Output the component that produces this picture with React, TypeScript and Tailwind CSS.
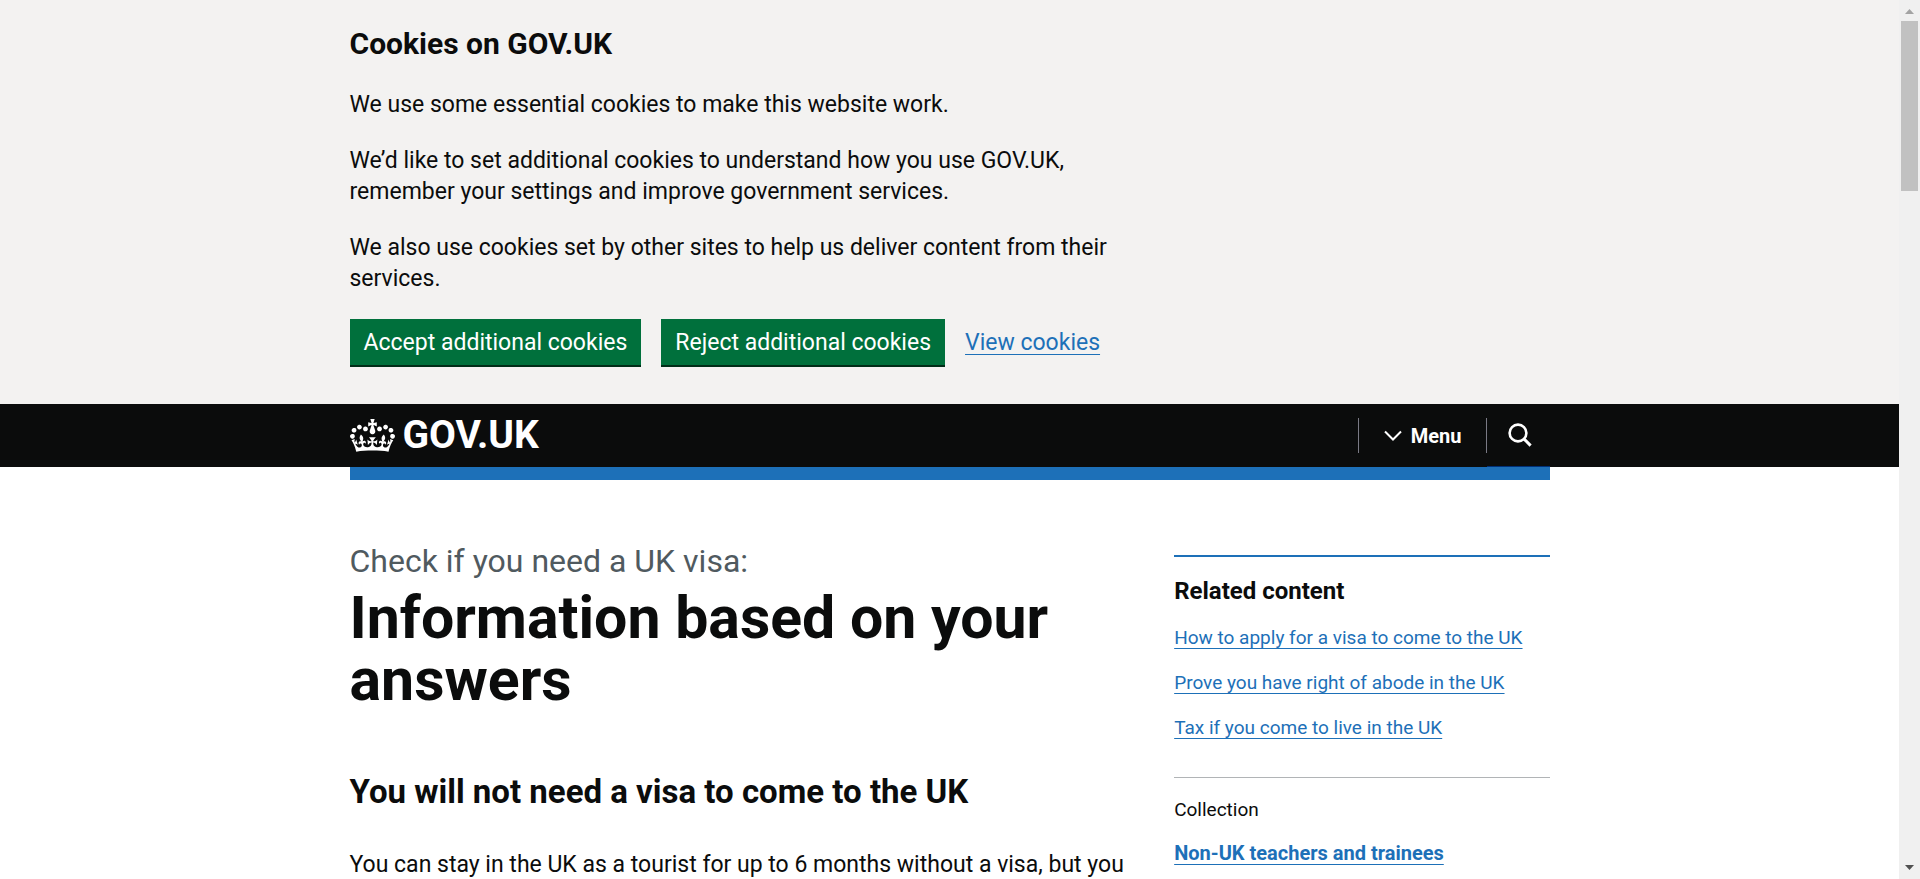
import type { ReactNode } from "react";

const relatedLinks = [
  "How to apply for a visa to come to the UK",
  "Prove you have right of abode in the UK",
  "Tax if you come to live in the UK",
];

function Container({ className = "", children }: { className?: string; children?: ReactNode }) {
  return <div className={`mx-auto w-full max-w-[1200px] ${className}`}>{children}</div>;
}

function TextLink({ className = "", children }: { className?: string; children: ReactNode }) {
  return (
    <a
      href="#"
      className={`text-[#1d70b8] underline decoration-1 underline-offset-4 hover:text-[#003078] ${className}`}
    >
      {children}
    </a>
  );
}

function GreenButton({ children }: { children: ReactNode }) {
  return (
    <button
      type="button"
      className="h-[46px] bg-[#00703c] px-[14px] pt-[2px] text-[23px] text-white shadow-[0_2px_0_#002d18] hover:bg-[#005a30]"
    >
      {children}
    </button>
  );
}

function Crown() {
  return (
    <svg aria-hidden="true" viewBox="0 0 132 97" className="h-[33px] w-[45px]" fill="currentColor" fillRule="evenodd">
      <path d="M25 30.2c3.5 1.5 7.7-.2 9.1-3.7 1.5-3.6-.2-7.8-3.9-9.2-3.6-1.4-7.6.3-9.1 3.9-1.4 3.5.3 7.5 3.9 9zM9 39.5c3.6 1.5 7.8-.2 9.2-3.7 1.5-3.6-.2-7.8-3.9-9.1-3.6-1.5-7.6.2-9.1 3.8-1.4 3.5.3 7.5 3.8 9zM4.4 57.2c3.5 1.5 7.7-.2 9.1-3.8 1.5-3.6-.2-7.7-3.9-9.1-3.5-1.5-7.6.3-9.1 3.8-1.4 3.5.3 7.6 3.9 9.1zm38.3-21.4c3.5 1.5 7.7-.2 9.1-3.8 1.5-3.6-.2-7.7-3.9-9.1-3.6-1.5-7.6.3-9.1 3.8-1.3 3.6.4 7.7 3.9 9.1zm64.4-5.6c-3.6 1.5-7.8-.2-9.1-3.7-1.5-3.6.2-7.8 3.8-9.2 3.6-1.4 7.7.3 9.2 3.9 1.3 3.5-.4 7.5-3.9 9zm15.9 9.3c-3.6 1.5-7.7-.2-9.1-3.7-1.5-3.6.2-7.8 3.7-9.1 3.6-1.5 7.7.2 9.2 3.8 1.5 3.5-.3 7.5-3.8 9zm4.7 17.7c-3.6 1.5-7.8-.2-9.2-3.8-1.5-3.6.2-7.7 3.9-9.1 3.6-1.5 7.7.3 9.2 3.8 1.3 3.5-.4 7.6-3.9 9.1zM89.3 35.8c-3.6 1.5-7.8-.2-9.2-3.8-1.4-3.6.2-7.7 3.9-9.1 3.6-1.5 7.7.3 9.2 3.8 1.4 3.6-.3 7.7-3.9 9.1zM69.7 17.7l8.9 4.7V9.3l-8.9 2.8c-.2-.3-.5-.6-.9-.9L72.4 0H59.6l3.5 11.2c-.3.3-.6.5-.9.9l-8.8-2.8v13.1l8.8-4.7c.3.3.6.7.9.9l-5 15.4v.1c-.2.8-.4 1.6-.4 2.4 0 4.1 3.1 7.5 7 8.1h.2c.3 0 .7.1 1 .1.4 0 .7 0 1-.1h.2c4-.6 7.1-4.1 7.1-8.1 0-.8-.1-1.7-.4-2.4V34l-5.1-15.4c.4-.2.7-.6 1-.9zM66 92.8c16.9 0 32.8 1.1 47.1 3.2 4-16.9 8.9-26.7 14-33.5l-9.6-3.4c1 4.9 1.1 7.2 0 10.2-1.5-1.4-3-4.3-4.2-8.7L108.6 76c2.8-2 5-3.2 7.5-3.3-4.4 9.4-10 11.9-13.6 11.2-4.3-.8-6.3-4.6-5.6-7.9 1-4.7 5.7-5.9 8-.5 4.3-8.7-3-11.4-7.6-8.8 7.1-7.2 7.9-13.5 2.1-21.1-8 6.1-8.1 12.3-4.5 20.8-4.7-5.4-12.1-2.5-9.5 6.2 3.4-5.2 7.9-2 7.2 3.1-.6 4.3-6.4 7.8-13.5 7.2-10.3-.9-10.9-8-11.2-13.8 2.5-.5 7.1 1.8 11 7.3L80.2 60c-4.1 4.4-8 5.3-12.3 5.4 1.4-4.4 8-11.6 8-11.6H55.5s6.4 7.2 7.9 11.6c-4.2-.1-8-1-12.3-5.4l1.4 16.4c3.9-5.5 8.5-7.7 10.9-7.3-.3 5.8-.9 12.8-11.1 13.8-7.2.6-12.9-2.9-13.5-7.2-.7-5 3.8-8.3 7.1-3.1 2.7-8.7-4.6-11.6-9.4-6.2 3.7-8.5 3.6-14.7-4.6-20.8-5.8 7.6-5 13.9 2.2 21.1-4.7-2.6-11.9.1-7.7 8.8 2.3-5.5 7.1-4.2 8.1.5.7 3.3-1.3 7.1-5.7 7.9-3.5.7-9-1.8-13.5-11.2 2.5.1 4.7 1.3 7.5 3.3l-4.7-15.4c-1.2 4.4-2.7 7.2-4.3 8.7-1.1-3-.9-5.3 0-10.2l-9.5 3.4c5 6.9 9.9 16.7 14 33.5 14.8-2.1 30.8-3.2 47.7-3.2z" />
    </svg>
  );
}

function CookieBanner() {
  return (
    <section aria-label="Cookies on GOV.UK" className="bg-[#f3f2f1] pt-[25px] pb-[36px]">
      <Container>
        <h2 className="mb-[27px] text-[30px] leading-[37px] font-bold">Cookies on GOV.UK</h2>
        <div className="flex max-w-[788px] flex-col gap-[25px] text-[23px] leading-[31px]">
          <p>We use some essential cookies to make this website work.</p>
          <p>
            We’d like to set additional cookies to understand how you use GOV.UK, remember your settings and improve
            government services.
          </p>
          <p>We also use cookies set by other sites to help us deliver content from their services.</p>
        </div>
        <div className="mt-[25px] flex items-baseline gap-5 pb-[3px]">
          <GreenButton>Accept additional cookies</GreenButton>
          <GreenButton>Reject additional cookies</GreenButton>
          <TextLink className="text-[23px]">View cookies</TextLink>
        </div>
      </Container>
    </section>
  );
}

function Header() {
  return (
    <header>
      <div className="bg-[#0b0c0c] text-white">
        <Container className="flex h-[63px] items-stretch justify-between">
          <a href="#" className="flex items-center gap-2 text-[39px] leading-none font-bold">
            <Crown />
            GOV.UK
          </a>
          <nav aria-label="Menu" className="flex items-stretch">
            <div className="my-[14px] flex border-x border-[#7a7a85]">
              <button type="button" className="flex items-center gap-[9px] pr-[24px] pl-[25px] text-[20px] font-bold">
                <svg aria-hidden="true" viewBox="0 0 18 12" className="h-[12px] w-[18px]" fill="none" stroke="currentColor" strokeWidth="2">
                  <path d="M1 1.5 9 9.5 17 1.5" />
                </svg>
                Menu
              </button>
            </div>
            <button
              type="button"
              aria-label="Search GOV.UK"
              className="flex w-[63px] items-center justify-center border-b border-[#003078] pl-[3px]"
            >
              <svg aria-hidden="true" viewBox="0 0 24 24" className="size-[24px]" fill="none" stroke="currentColor" strokeWidth="2.6">
                <circle cx="10" cy="10" r="8.4" />
                <path d="M15.6 15.6 22.6 22.6" strokeWidth="3" />
              </svg>
            </button>
          </nav>
        </Container>
      </div>
      <Container className="h-[13px] bg-[#1d70b8]" />
    </header>
  );
}

function RelatedContent() {
  return (
    <aside className="mt-[75px] text-[19px] leading-[25px]">
      <div className="border-t-2 border-[#1d70b8] pt-[19px]">
        <h2 className="text-[24px] leading-[30px] font-bold">Related content</h2>
        <ul className="mt-[19px] flex flex-col gap-5">
          {relatedLinks.map((label) => (
            <li key={label}>
              <TextLink>{label}</TextLink>
            </li>
          ))}
        </ul>
      </div>
      <div className="mt-[37px] border-t border-[#b1b4b6] pt-[19px]">
        <h3>Collection</h3>
        <p className="mt-[19px] text-[20px] font-bold">
          <TextLink>Non-UK teachers and trainees</TextLink>
        </p>
      </div>
    </aside>
  );
}

function Scrollbar() {
  return (
    <div aria-hidden="true" className="flex w-[21px] shrink-0 flex-col items-center bg-[#f0f0f0] py-[9px]">
      <svg viewBox="0 0 9 5" className="h-[5px] w-[9px]" fill="#a3a3a3">
        <path d="M4.5 0 9 5H0z" />
      </svg>
      <div className="mt-[7px] h-[170px] w-[17px] bg-[#c1c1c1]" />
      <svg viewBox="0 0 9 5" className="mt-auto h-[5px] w-[9px]" fill="#505050">
        <path d="M0 0H9L4.5 5z" />
      </svg>
    </div>
  );
}

export default function App() {
  return (
    <div className="flex h-screen overflow-hidden bg-white font-['Roboto',sans-serif] text-[#0b0c0c]">
      <div className="min-w-0 flex-1 overflow-hidden">
        <CookieBanner />
        <Header />
        <Container className="grid grid-cols-3 gap-x-[37px]">
          <main className="col-span-2 pt-[60px]">
            <h1 className="flex flex-col gap-[5px]">
              <span className="text-[32px] leading-[42px] text-[#505a5f]">Check if you need a UK visa:</span>
              <span className="text-[59px] leading-[62px] font-bold">Information based on your answers</span>
            </h1>
            <h2 className="mt-[62px] text-[33px] leading-[38px] font-bold">
              You will not need a visa to come to the UK
            </h2>
            <p className="mt-[38px] text-[23px] leading-[31px]">
              You can stay in the UK as a tourist for up to 6 months without a visa, but you
            </p>
          </main>
          <RelatedContent />
        </Container>
      </div>
      <Scrollbar />
    </div>
  );
}
